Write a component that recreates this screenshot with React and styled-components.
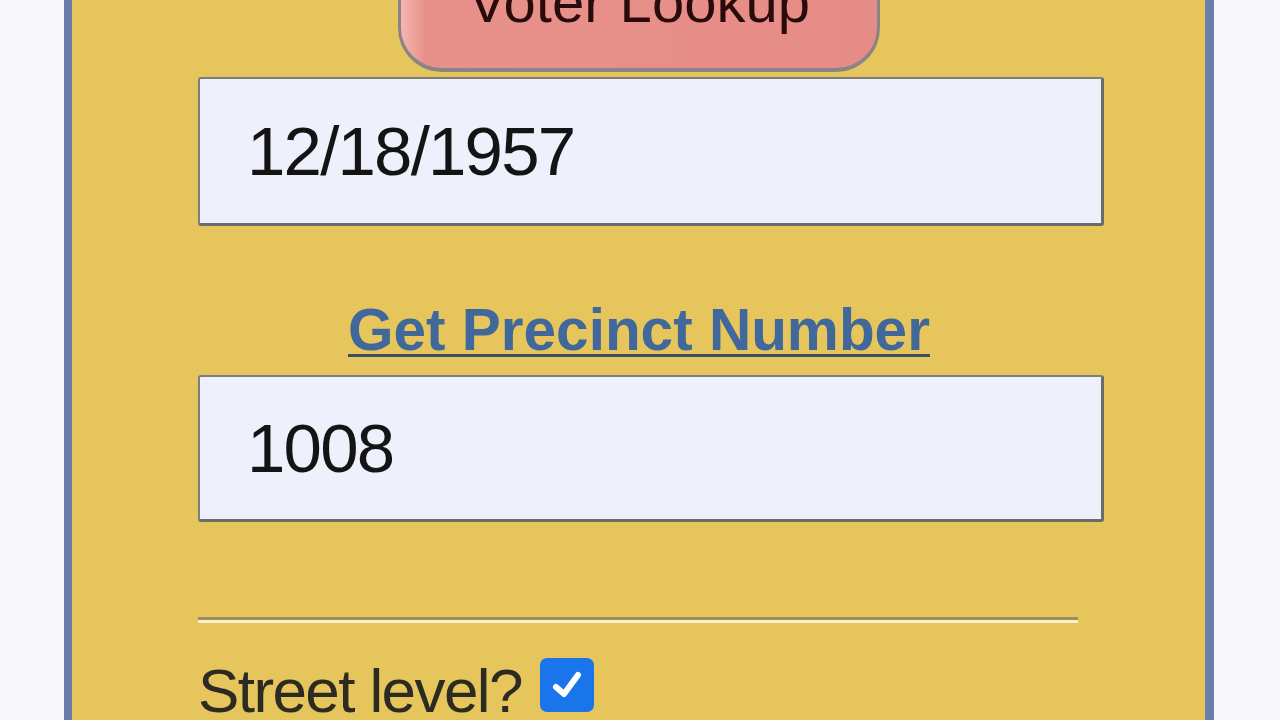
import React from "react";
import styled, { createGlobalStyle } from "styled-components";

const GlobalStyle = createGlobalStyle`
  html, body {
    margin: 0;
    padding: 0;
    background: #f8f7fa;
    overflow: hidden;
  }
  body {
    font-family: "Liberation Sans", Arial, sans-serif;
  }
`;

const Page = styled.div`
  height: 720px;
  overflow: hidden;
`;

const Panel = styled.div`
  box-sizing: border-box;
  width: 1150px;
  margin: -76px 0 0 64px;
  border: 8px solid #6a7dab;
  border-right-width: 9px;
  background: #e6c65c;
  padding: 0 0 60px 126px;
  display: flex;
  flex-direction: column;
  align-items: flex-start;
`;

const LookupButton = styled.button`
  box-sizing: border-box;
  align-self: flex-start;
  margin-left: 200px;
  width: 482px;
  height: 140px;
  padding: 34px 0;
  border: 3px solid #8a8585;
  border-bottom-width: 4px;
  border-radius: 44px;
  background: linear-gradient(to right, #f6b6b1 0%, #e8918b 5%, #e68c87 100%);
  font-family: "Liberation Sans", Arial, sans-serif;
  font-size: 58px;
  line-height: 66px;
  color: #2a0b0b;
  cursor: pointer;
`;

const TextField = styled.input`
  box-sizing: border-box;
  width: 906px;
  height: ${(p) => p.$h}px;
  margin-top: ${(p) => p.$top}px;
  padding: 0 0 0 47px;
  border: 2px solid #7d7d7d;
  border-right: 3px solid #6b6b6b;
  border-bottom: 3px solid #6b6b6b;
  border-radius: 3px;
  background: #eef0fc;
  font-family: "Liberation Sans", Arial, sans-serif;
  font-size: 69px;
  letter-spacing: -1.8px;
  color: #141414;
  outline: none;
`;

const PrecinctLink = styled.a`
  align-self: flex-start;
  margin: 70px 0 0 150px;
  font-size: 58.5px;
  font-weight: 700;
  line-height: 67px;
  color: #41689a;
  text-decoration: underline;
  text-decoration-color: #3c4f60;
  text-decoration-thickness: 3px;
  text-underline-offset: 4px;
  cursor: pointer;
`;

const Rule = styled.hr`
  box-sizing: border-box;
  width: 880px;
  height: 6px;
  margin: 95px 0 0 0;
  border: none;
  border-top: 3px solid #9a8d60;
  border-bottom: 3px solid #fbf0c8;
`;

const CheckRow = styled.label`
  display: flex;
  align-items: center;
  margin-top: 32px;
  font-size: 62px;
  letter-spacing: -1.6px;
  line-height: 71px;
  color: #2b2b22;
`;

const CheckBox = styled.span`
  box-sizing: border-box;
  width: 54px;
  height: 54px;
  margin: -12px 0 0 18px;
  border-radius: 7px;
  background: #1a74ea;
  display: flex;
  align-items: center;
  justify-content: center;
`;

export default function App() {
  return (
    <Page>
      <GlobalStyle />
      <Panel>
        <LookupButton>Voter Lookup</LookupButton>
        <TextField $top={5} $h={149} defaultValue="12/18/1957" readOnly />
        <PrecinctLink>Get Precinct Number</PrecinctLink>
        <TextField $top={12} $h={147} defaultValue="1008" readOnly />
        <Rule />
        <CheckRow>
          Street level?
          <CheckBox>
            <svg width="40" height="40" viewBox="0 0 40 40">
              <path
                d="M9 22 L17 29 L31 10"
                fill="none"
                stroke="#fff"
                strokeWidth="6"
                strokeLinecap="round"
                strokeLinejoin="round"
              />
            </svg>
          </CheckBox>
        </CheckRow>
      </Panel>
    </Page>
  );
}
